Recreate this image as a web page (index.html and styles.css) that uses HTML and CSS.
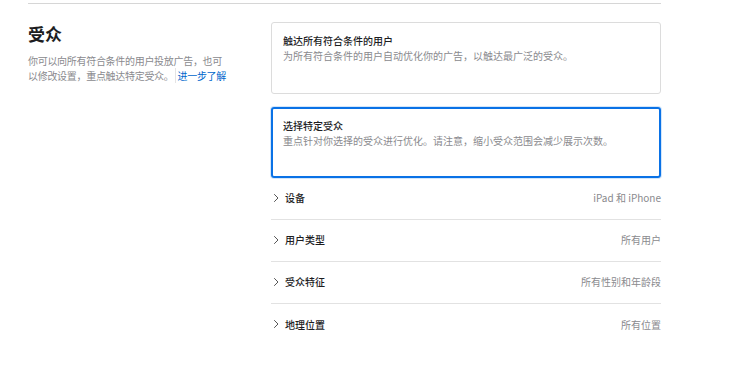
FILE: index.html
```html
<!DOCTYPE html>
<html lang="zh-CN">
<head>
<meta charset="utf-8">
<link rel="stylesheet" href="styles.css">
</head>
<body>
<div class="page">
  <section class="section">
    <div class="intro">
      <h2 class="intro-title">受众</h2>
      <p class="intro-text">你可以向所有符合条件的用户投放广告，也可以修改设置，重点触达特定受众。<a class="link" href="#">进一步了解</a></p>
    </div>
    <div class="options">
      <div class="card">
        <div class="card-title">触达所有符合条件的用户</div>
        <div class="card-text">为所有符合条件的用户自动优化你的广告，以触达最广泛的受众。</div>
      </div>
      <div class="card card-selected">
        <div class="card-title">选择特定受众</div>
        <div class="card-text">重点针对你选择的受众进行优化。请注意，缩小受众范围会减少展示次数。</div>
      </div>
      <ul class="rows">
        <li class="row">
          <span class="row-label"><svg class="chev" viewBox="0 0 6 10" width="6" height="10"><path d="M1.2 1.2l3.8 3.8-3.8 3.8" fill="none" stroke="#555" stroke-width="1"/></svg>设备</span>
          <span class="row-value">iPad 和 iPhone</span>
        </li>
        <li class="row">
          <span class="row-label"><svg class="chev" viewBox="0 0 6 10" width="6" height="10"><path d="M1.2 1.2l3.8 3.8-3.8 3.8" fill="none" stroke="#555" stroke-width="1"/></svg>用户类型</span>
          <span class="row-value">所有用户</span>
        </li>
        <li class="row">
          <span class="row-label"><svg class="chev" viewBox="0 0 6 10" width="6" height="10"><path d="M1.2 1.2l3.8 3.8-3.8 3.8" fill="none" stroke="#555" stroke-width="1"/></svg>受众特征</span>
          <span class="row-value">所有性别和年龄段</span>
        </li>
        <li class="row">
          <span class="row-label"><svg class="chev" viewBox="0 0 6 10" width="6" height="10"><path d="M1.2 1.2l3.8 3.8-3.8 3.8" fill="none" stroke="#555" stroke-width="1"/></svg>地理位置</span>
          <span class="row-value">所有位置</span>
        </li>
      </ul>
    </div>
  </section>
</div>
</body>
</html>
```
FILE: styles.css
```css
* { box-sizing: border-box; }
html, body { margin: 0; padding: 0; background: #fff; }
body {
  font-family: "Noto Sans CJK SC", "Noto Sans", "Liberation Sans", sans-serif;
  color: #1d1d1f;
  font-size: 10px;
}
.page {
  padding: 3px 0 0 28px;
}
.section {
  width: 633px;
  border-top: 1px solid #d6d6d6;
  display: flex;
  padding-top: 18px;
}
.intro {
  width: 243px;
  flex: none;
}
.intro-title {
  margin: 0;
  font-size: 17px;
  line-height: 24px;
  font-weight: 700;
  color: #1d1d1f;
}
.intro-text {
  margin: 7px 0 0;
  width: 201px;
  font-size: 10px;
  line-height: 15px;
  letter-spacing: -0.3px;
  color: #8a8a8e;
}
.link {
  color: #0066cc;
  text-decoration: none;
  white-space: nowrap;
  border-left: 1px solid #e4e4e4;
  padding-left: 2px;
  margin-left: 1px;
}
.options {
  flex: 1;
  display: flex;
  flex-direction: column;
}
.card {
  height: 72px;
  border: 1px solid #dcdcdc;
  border-radius: 3px;
  padding: 10px 11px 0;
  margin-bottom: 13px;
}
.card-selected {
  border: 2px solid #0a72e6;
  box-shadow: 0 0 0 1px rgba(10,114,230,0.18);
  padding: 9px 10px 0;
  height: 71px;
  margin-bottom: 0;
}
.card-title {
  font-size: 10px;
  line-height: 15px;
  font-weight: 500;
  color: #1d1d1f;
}
.card-text {
  font-size: 10px;
  line-height: 15px;
  color: #8a8a8e;
}
.rows {
  list-style: none;
  margin: 0;
  padding: 0;
}
.row {
  height: 42px;
  display: flex;
  align-items: center;
  justify-content: space-between;
  border-bottom: 1px solid #e2e2e2;
  padding-bottom: 2px;
}
.row:last-child { border-bottom: none; }
.row-label {
  display: flex;
  align-items: center;
  font-size: 10px;
  font-weight: 500;
  color: #1d1d1f;
}
.chev {
  margin: 0 6px 0 2px;
}
.row-value {
  font-size: 10px;
  color: #8a8a8e;
}
```
